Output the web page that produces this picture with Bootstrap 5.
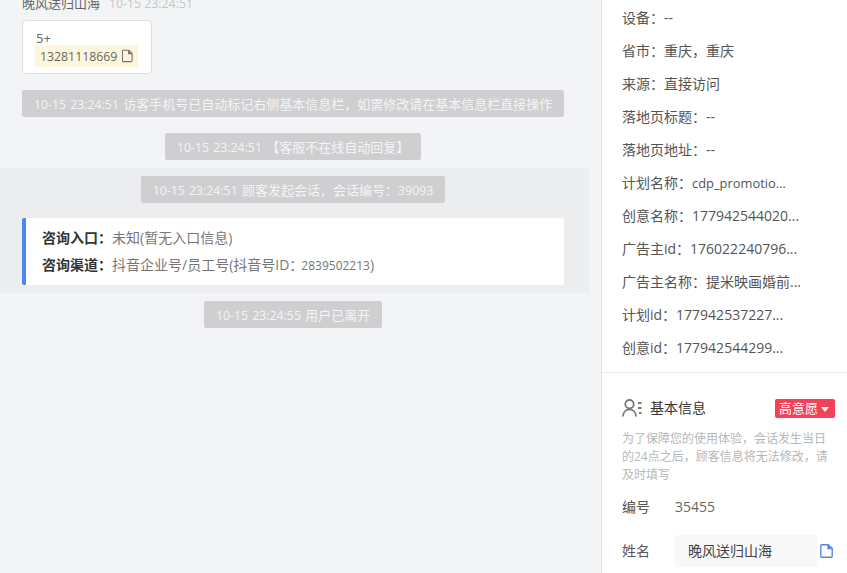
<!DOCTYPE html>
<html lang="zh-CN">
<head>
<meta charset="utf-8">
<title>会话</title>
<link rel="stylesheet" href="https://cdn.jsdelivr.net/npm/bootstrap@5.3.0/dist/css/bootstrap.min.css">
<style>
html,body{height:573px;overflow:hidden;background:#f3f4f6}
body{font-family:"Open Sans","Noto Sans CJK SC",sans-serif;font-size:13px;line-height:18px;color:#555}
.shell{height:573px;width:847px}
.lat{font-size:12.3px}
.chat{width:601px;flex:none;background:#f3f4f6;overflow:hidden}
.head-line{margin:-6px 0 0 22px;height:18px;gap:9px}
.visitor{color:#666}
.stamp{color:#c4c6c9}
.msg-card{margin:8px 0 0 22px;width:130px;height:54px;padding:8px 13px;background:#fff;border:1px solid #dcdee0;border-radius:4px;color:#666}
.phone{display:flex;width:103px;align-items:center;gap:5px;height:22px;padding:0 5px;margin:-2px 0 0 -1px;background:#fdf6dc;white-space:nowrap;color:#666}
.phone .lat{padding-top:2px}
.sys-row{justify-content:center}
.sys-pill{height:27px;padding:0 12px;background:#cfcfd1;color:#f4f4f5;border-radius:2px;line-height:28px;word-spacing:1px;white-space:nowrap}
.first-sys{margin:16px 37px 0 22px}
.second-sys{margin:16px 180px 0 165px}
.band{margin-top:8px;width:589px;height:125px;padding:8px 25px 0 22px;background:#ecedef}
.entry{height:67px;margin-top:15px;padding:0 16px;background:#fff;border-left:4px solid #4f86f7;border-radius:2px}
.entry div{line-height:27px;font-size:14px;white-space:nowrap;color:#777}
.entry b{color:#333;font-weight:700}
.entry .lat{font-size:12px;margin-left:-2px}
.leave-row{margin:8px 219px 0 204px}
.panel{width:246px;flex:none;background:#fff;border-left:1px solid #dfe1e3;overflow:hidden;font-size:14px}
.meta{margin-top:1px;padding:0 0 0 20px;border-bottom:1px solid #e8e8e8;height:372px}
.meta div{height:33px;line-height:33px;color:#555;white-space:nowrap}
.narrow{font-size:12.9px}
.basic{padding:25px 12px 0 20px}
.basic-top{height:20px}
.basic-title{gap:8px;color:#333}
.level{width:60px;height:19px;padding-left:4px;font-size:13px;line-height:19px;background:#f5405a;color:#fff;border-radius:2px;white-space:nowrap}
.caret-mark{display:inline-block;margin-left:3px;border:4px solid transparent;border-top:5px solid #fff;border-bottom:0;vertical-align:1px}
.hint{margin-top:12px;font-size:12px;line-height:18px;color:#b5b7ba;width:207px}
.num-row{margin-top:14px;height:18px}
.label-cell{width:53px;flex:none;color:#555}
.num{color:#666}
.name-row{margin-top:18px;height:34px}
.name-box{width:142px;height:32px;line-height:32px;padding-left:13px;background:#f8f8f8;border-radius:2px;color:#444;white-space:nowrap}
.name-copy{margin-left:3px;flex:none}
</style>
</head>
<body>
<div class="shell d-flex">
  <main class="chat">
    <div class="head-line d-flex align-items-baseline"><span class="visitor">晚风送归山海</span><span class="stamp lat">10-15 23:24:51</span></div>
    <div class="msg-card">
      <div>5+</div>
      <span class="phone"><span class="lat">13281118669</span>
        <svg width="12" height="14" viewBox="0 0 12 14" fill="none" stroke="#707070" stroke-width="1.2"><path d="M1.500.6h6.200l3.700 3.500v8.200a1 1 0 0 1-1 1H1.500a1 1 0 0 1-1-1V1.600a1 1 0 0 1 1-1z"/><path d="M7.500.8v3.600h3.700" fill="#888"/></svg>
      </span>
    </div>
    <div class="sys-pill first-sys"><span class="lat">10-15 23:24:51</span> 访客手机号已自动标记右侧基本信息栏，如需修改请在基本信息栏直接操作</div>
    <div class="sys-pill second-sys"><span class="lat">10-15 23:24:51</span> 【客服不在线自动回复】</div>
    <section class="band">
      <div class="d-flex sys-row"><div class="sys-pill"><span class="lat">10-15 23:24:51</span> 顾客发起会话，会话编号：<span class="lat">39093</span></div></div>
      <div class="entry d-flex flex-column justify-content-center">
        <div><b>咨询入口：</b>未知(暂无入口信息)</div>
        <div><b>咨询渠道：</b>抖音企业号/员工号(抖音号ID：<span class="lat">2839502213</span>)</div>
      </div>
    </section>
    <div class="sys-pill leave-row"><span class="lat">10-15 23:24:55</span> 用户已离开</div>
  </main>
  <aside class="panel">
    <div class="meta">
      <div>设备：--</div>
      <div>省市：重庆，重庆</div>
      <div>来源：直接访问</div>
      <div>落地页标题：--</div>
      <div>落地页地址：--</div>
      <div>计划名称：<span class="narrow">cdp_promotio...</span></div>
      <div>创意名称：177942544020...</div>
      <div>广告主id：176022240796...</div>
      <div>广告主名称：提米映画婚前...</div>
      <div>计划id：177942537227...</div>
      <div>创意id：177942544299...</div>
    </div>
    <div class="basic">
      <div class="basic-top d-flex justify-content-between align-items-center">
        <div class="basic-title d-flex align-items-center">
          <svg width="20" height="18" viewBox="0 0 20 18" fill="none" stroke="#777" stroke-width="1.8"><circle cx="7.500" cy="5.200" r="4.200"/><path d="M.9 17.500c.3-4.400 3-7.200 6.600-7.200s6.300 2.800 6.600 7.200"/><path d="M16 4h3.500M16 9h3.500M17 14h2.500"/></svg>
          <span>基本信息</span>
        </div>
        <div class="level">高意愿<i class="caret-mark"></i></div>
      </div>
      <p class="hint mb-0">为了保障您的使用体验，会话发生当日的24点之后，顾客信息将无法修改，请及时填写</p>
      <div class="num-row d-flex align-items-center"><span class="label-cell">编号</span><span class="num">35455</span></div>
      <div class="name-row d-flex align-items-center"><span class="label-cell">姓名</span><span class="name-box">晚风送归山海</span>
        <svg class="name-copy" width="13" height="14" viewBox="0 0 13 14" fill="none" stroke="#5b84ea" stroke-width="1.4"><path d="M1.800.8h6.400l4 3.600v7.800a1 1 0 0 1-1 1H1.800a1 1 0 0 1-1-1V1.800a1 1 0 0 1 1-1z"/><path d="M8 .8v3.800h4.200" fill="#5b84ea"/></svg>
      </div>
    </div>
  </aside>
</div>
<script src="https://cdn.jsdelivr.net/npm/bootstrap@5.3.0/dist/js/bootstrap.bundle.min.js"></script>
</body>
</html>
